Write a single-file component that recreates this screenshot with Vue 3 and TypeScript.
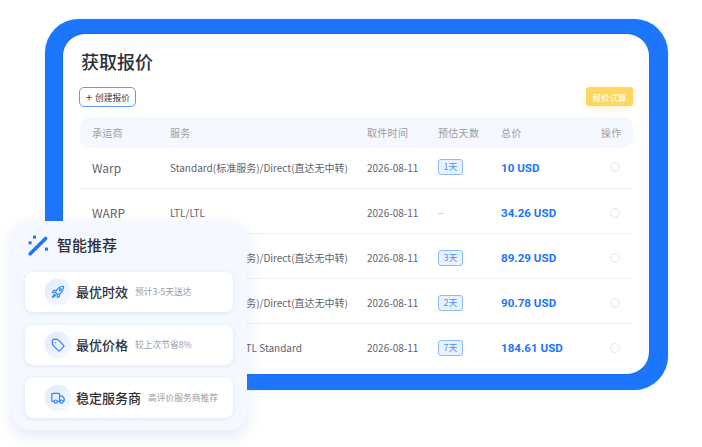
<template>
  <div class="stage">
    <div class="frame">
      <div class="card">
        <h1 class="title">获取报价</h1>
        <div class="toolbar">
          <button class="btn-create"><span class="plus">+</span>创建报价</button>
          <button class="btn-calc">报价试算</button>
        </div>
        <div class="table">
          <div class="row head">
            <span>承运商</span>
            <span>服务</span>
            <span>取件时间</span>
            <span>预估天数</span>
            <span>总价</span>
            <span class="op">操作</span>
          </div>
          <div v-for="(q, i) in quotes" :key="i" class="row body" :class="{ first: i === 0 }">
            <span class="carrier">{{ q.carrier }}</span>
            <span class="service">{{ q.service }}</span>
            <span class="date">2026-08-11</span>
            <span class="days">
              <em v-if="q.days" class="tag">{{ q.days }}天</em>
              <template v-else>--</template>
            </span>
            <span class="price">{{ q.price }} USD</span>
            <span class="radio-cell"><i class="radio"></i></span>
          </div>
        </div>
      </div>
    </div>

    <aside class="panel">
      <div class="panel-head">
        <svg class="wand" viewBox="0 0 21 21" width="21" height="21">
          <path d="M2.2 18.8 14.6 6.4" stroke="#1c76fd" stroke-width="3.6" stroke-linecap="round" />
          <path d="M15.6 5.4 17.6 3.4" stroke="#1c76fd" stroke-width="3.6" stroke-linecap="round" />
          <rect x="5" y="0.6" width="3" height="3" fill="#1c76fd" />
          <rect x="0.6" y="6.4" width="3" height="3" fill="#1c76fd" />
          <rect x="17" y="12.6" width="3" height="3" fill="#1c76fd" />
        </svg>
        <span class="panel-title">智能推荐</span>
      </div>
      <div v-for="r in recs" :key="r.name" class="rec">
        <span class="rec-icon">
          <svg v-if="r.icon === 'rocket'" viewBox="0 0 14 14" width="14" height="14" fill="none" stroke="#2f82fb" stroke-width="1.1" stroke-linejoin="round" stroke-linecap="round">
            <path d="M4.6 7.6C5 4.4 8.4 1.2 12.7 1.2 12.8 5.6 9.6 9 6.4 9.4Z" />
            <path d="M4.6 5.2 2.4 5.6 1.4 7.6 4.4 7.8" />
            <path d="M8.8 9.4 8.4 11.6 6.4 12.6 6.2 9.6" />
            <circle cx="9.4" cy="4.6" r="1" />
            <path d="M3.4 9.4 1.4 12.6 4.6 10.6Z" fill="#2f82fb" />
          </svg>
          <svg v-else-if="r.icon === 'tag'" viewBox="0 0 14 14" width="14" height="14" fill="none" stroke="#2f82fb" stroke-width="1.2" stroke-linejoin="round">
            <path d="M1.4 2.4 2.6 1.2 7 1.6 12.6 7.4C13 7.8 13 8.3 12.6 8.7L8.7 12.6C8.3 13 7.8 13 7.4 12.6L1.6 6.8Z" />
            <circle cx="4.6" cy="4.6" r="0.7" fill="#2f82fb" stroke="none" />
          </svg>
          <svg v-else viewBox="0 0 14 14" width="14" height="14" fill="none" stroke="#2f82fb" stroke-width="1.2" stroke-linejoin="round">
            <path d="M3 10.4H1.8C1.2 10.4.8 10 .8 9.4V3.4C.8 2.8 1.2 2.4 1.8 2.4H7.6C8.2 2.4 8.6 2.8 8.6 3.4V10.4H6.4" />
            <path d="M8.6 5H11L13.2 7.4V9.6C13.2 10.1 12.9 10.4 12.4 10.4H12M8.6 10.4H9" />
            <circle cx="4.7" cy="10.6" r="1.6" />
            <circle cx="10.5" cy="10.6" r="1.6" />
          </svg>
        </span>
        <span class="rec-name">{{ r.name }}</span>
        <span class="rec-sub">{{ r.sub }}</span>
      </div>
    </aside>
  </div>
</template>

<script setup lang="ts">
interface Quote {
  carrier: string;
  service: string;
  days: number | null;
  price: string;
}

interface Rec {
  name: string;
  sub: string;
  icon: 'rocket' | 'tag' | 'truck';
}

const direct = 'Standard(标准服务)/Direct(直达无中转)';

// the carriers of the last three rows sit under the panel
const quotes: Quote[] = [
  { carrier: 'Warp', service: direct, days: 1, price: '10' },
  { carrier: 'WARP', service: 'LTL/LTL', days: null, price: '34.26' },
  { carrier: '', service: direct, days: 3, price: '89.29' },
  { carrier: '', service: direct, days: 2, price: '90.78' },
  { carrier: '', service: 'Standard(DTL)/LTL Standard', days: 7, price: '184.61' }
];

const recs: Rec[] = [
  { name: '最优时效', sub: '预计3-5天送达', icon: 'rocket' },
  { name: '最优价格', sub: '较上次节省8%', icon: 'tag' },
  { name: '稳定服务商', sub: '高评价服务商推荐', icon: 'truck' }
];
</script>

<style scoped>
.stage {
  position: relative;
  width: 702px;
  height: 447px;
  padding: 19px 34px 0 45px;
  box-sizing: border-box;
  overflow: hidden;
  font-family: "Noto Sans CJK SC", "Noto Sans", sans-serif;
  color: #33363f;
}

.frame {
  height: 371px;
  padding: 15px 19px 16px 18px;
  box-sizing: border-box;
  background: #1c76fd;
  border-radius: 34px;
  box-shadow: 0 0 1px rgba(28, 118, 253, 0.6);
}

.card {
  height: 100%;
  padding: 14px 16px 0 16px;
  box-sizing: border-box;
  background: #fff;
  border-radius: 22px;
  box-shadow: 0 0 2px rgba(20, 40, 90, 0.35);
}

.title {
  margin: 0 0 0 2px;
  font-size: 18px;
  line-height: 26px;
  font-weight: 500;
  color: #2d3038;
}

.toolbar {
  display: flex;
  justify-content: space-between;
  margin-top: 13px;
}

.btn-create {
  display: flex;
  align-items: center;
  gap: 3px;
  width: 57px;
  height: 20px;
  padding: 0 0 0 6px;
  box-sizing: border-box;
  background: #fff;
  border: 1px solid #5d9bf8;
  border-radius: 5px;
  font: 400 8.75px "Noto Sans CJK SC", sans-serif;
  color: #33363f;
}

.plus {
  font-size: 11px;
  line-height: 1;
}

.btn-calc {
  width: 47px;
  height: 19px;
  padding: 0;
  background: #fdd75e;
  border: 0;
  border-radius: 3px;
  box-shadow: 0 3px 8px rgba(253, 215, 94, 0.25);
  font: 400 8.5px "Noto Sans CJK SC", sans-serif;
  color: #fff;
}

.table {
  margin: 10px 0 0 1px;
}

.row {
  display: grid;
  grid-template-columns: 78px 197px 71px 63px 1fr 38px;
  align-items: center;
  width: 553px;
  padding-left: 12px;
  box-sizing: border-box;
}

.head {
  height: 31px;
  background: #f5f8fe;
  border-radius: 10px;
  font-size: 10px;
  letter-spacing: 0.03em;
  color: #9a9ca4;
}

.op {
  margin-left: 6px;
}

.body {
  height: 45px;
  padding-top: 3px;
  border-bottom: 1px solid #eff0f3;
  font-size: 10px;
  color: #61646d;
}

.body.first {
  height: 41px;
  padding-top: 0;
  padding-bottom: 2px;
}

.body:last-child {
  border-bottom-color: transparent;
}

.carrier {
  font-size: 12px;
}

.service {
  white-space: nowrap;
}

.days {
  font-size: 8px;
  color: #9a9ca4;
}

.tag {
  display: block;
  width: 25px;
  height: 16px;
  box-sizing: border-box;
  background: #e9f2ff;
  border: 1px solid #8dbafb;
  border-radius: 3px;
  font-style: normal;
  font-size: 9px;
  line-height: 14px;
  text-align: center;
  color: #4a8ffa;
}

.price {
  padding-top: 1px;
  font-family: Roboto, "Noto Sans", sans-serif;
  font-size: 11.6px;
  font-weight: 700;
  color: #1c76fd;
}

.radio-cell {
  display: flex;
  padding-left: 15px;
}

.radio {
  width: 10px;
  height: 10px;
  box-sizing: border-box;
  border: 1px solid #e3e5ea;
  border-radius: 50%;
}

.panel {
  position: absolute;
  left: 12px;
  top: 221px;
  width: 235px;
  height: 209px;
  padding: 13px 14px 0 13px;
  box-sizing: border-box;
  background: #f5f8ff;
  border-radius: 17px;
  box-shadow: 0 6px 16px rgba(80, 120, 200, 0.16);
}

.panel-head {
  display: flex;
  align-items: center;
  gap: 8px;
  height: 22px;
  margin: 0 0 16px 3px;
  font-size: 15px;
  font-weight: 500;
  color: #2d3038;
}

.panel-title {
  margin-bottom: 1px;
}

.wand {
  flex: none;
}

.rec {
  display: flex;
  align-items: center;
  height: 40px;
  margin-bottom: 13px;
  padding-left: 20px;
  box-sizing: border-box;
  background: #fff;
  border-radius: 8px;
  box-shadow: 0 1px 5px rgba(80, 120, 200, 0.14);
}

.rec-icon {
  display: flex;
  align-items: center;
  justify-content: center;
  flex: none;
  width: 26px;
  height: 26px;
  border-radius: 50%;
  background: linear-gradient(135deg, #dfeafd, #f8fafe);
  box-shadow: 0 0 1px rgba(80, 120, 200, 0.3);
}

.rec-name {
  margin: 0 0 2px 5px;
  font-size: 13px;
  font-weight: 500;
  color: #2d3038;
}

.rec-sub {
  margin: 0 0 1px 7px;
  font-size: 8.75px;
  color: #9a9ca4;
}
</style>
